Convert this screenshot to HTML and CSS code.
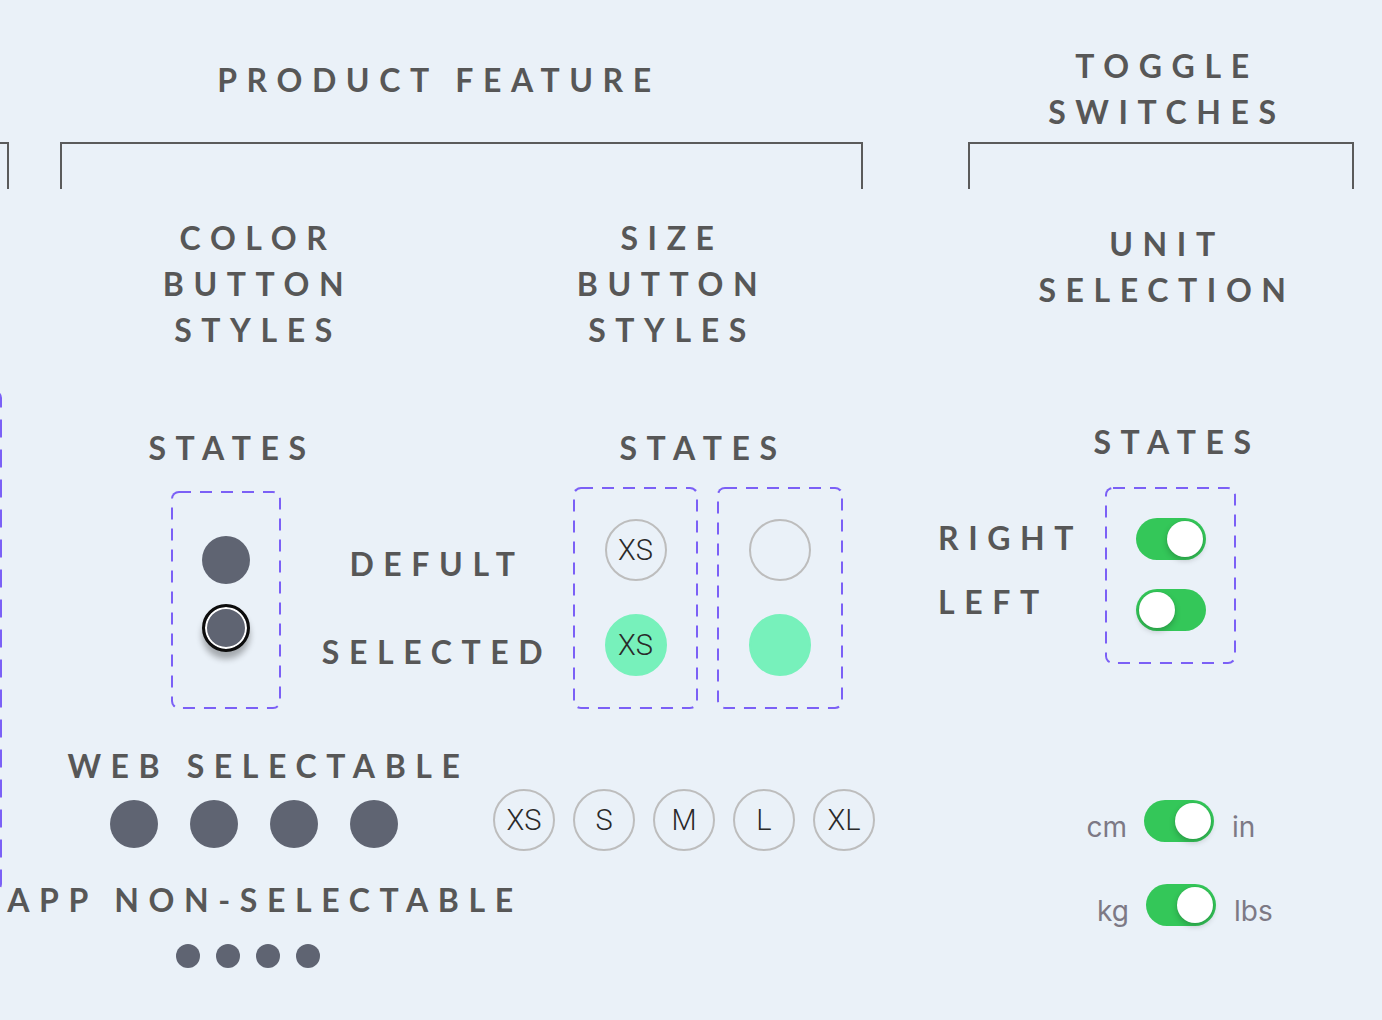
FILE: index.html
```html
<!DOCTYPE html>
<html lang="en">
<head>
    <meta charset="UTF-8">
    <title>Product feature buttons</title>
    <link rel="stylesheet" href="styles.css">
</head>
<body>
<div class="board">
    <!-- 商品规格按钮 -->
    <section class="feature">
        <h2 class="label feature-title">PRODUCT FEATURE</h2>
        <div class="brackets">
            <div class="bracket bracket-end"></div>
            <div class="bracket bracket-feature"></div>
        </div>

        <div class="titles">
            <h3 class="label title-color">COLOR<br>BUTTON<br>STYLES</h3>
            <h3 class="label title-size">SIZE<br>BUTTON<br>STYLES</h3>
        </div>

        <div class="states-row">
            <div class="label states-color">STATES</div>
            <div class="label states-size">STATES</div>
        </div>

        <div class="demo">
            <div class="frame frame-color">
                <span class="dot"></span>
                <span class="dot dot-selected"></span>
            </div>
            <div class="state-names">
                <div class="label">DEFULT</div>
                <div class="label selected-name">SELECTED</div>
            </div>
            <div class="frame frame-size">
                <span class="size">XS</span>
                <span class="size size-on">XS</span>
            </div>
            <div class="frame frame-size frame-blank">
                <span class="size"></span>
                <span class="size size-on"></span>
            </div>
        </div>

        <div class="web-row">
            <div class="web">
                <div class="label web-name">WEB SELECTABLE</div>
                <div class="dots">
                    <span class="dot"></span>
                    <span class="dot"></span>
                    <span class="dot"></span>
                    <span class="dot"></span>
                </div>
            </div>
            <div class="sizes">
                <span class="size">XS</span>
                <span class="size">S</span>
                <span class="size">M</span>
                <span class="size">L</span>
                <span class="size">XL</span>
            </div>
        </div>

        <div class="app">
            <div class="label app-name">APP NON-SELECTABLE</div>
            <div class="dots dots-small">
                <span class="dot"></span>
                <span class="dot"></span>
                <span class="dot"></span>
                <span class="dot"></span>
            </div>
        </div>

        <div class="frame frame-offcut"></div>
    </section>

    <!-- 开关 -->
    <section class="toggles">
        <h2 class="label toggles-title">TOGGLE<br>SWITCHES</h2>
        <div class="bracket bracket-toggles"></div>
        <h3 class="label unit-title">UNIT<br>SELECTION</h3>
        <div class="label toggle-states">STATES</div>

        <div class="toggle-demo">
            <div class="sides">
                <div class="label">RIGHT</div>
                <div class="label side-left">LEFT</div>
            </div>
            <div class="frame frame-toggle">
                <span class="switch"><span class="knob"></span></span>
                <span class="switch switch-left"><span class="knob"></span></span>
            </div>
        </div>

        <div class="unit">
            <span class="unit-from">cm</span>
            <span class="switch"><span class="knob"></span></span>
            <span class="unit-to">in</span>
        </div>
        <div class="unit unit-weight">
            <span class="unit-from">kg</span>
            <span class="switch"><span class="knob"></span></span>
            <span class="unit-to">lbs</span>
        </div>
    </section>
</div>
</body>
</html>
```

FILE: styles.css
```css
* {
    box-sizing: border-box;
}

body {
    margin: 0;
    background: #eaf1f8;
    font-family: "Lato", "Noto Sans", sans-serif;
    color: #575757;
}

.board {
    display: flex;
    width: 1382px;
    height: 1020px;
    overflow: hidden;
}

.label {
    margin: 0;
    font-size: 32px;
    font-weight: 700;
    letter-spacing: 9.6px;
    line-height: 46px;
    text-align: center;
}

/* 左侧：商品规格 */
.feature {
    width: 900px;
    flex: none;
    position: relative;
}

.feature-title {
    margin-top: 57px;
    width: 878px;
}

.brackets {
    display: flex;
    margin-top: 39px;
}

.bracket {
    height: 47px;
    border: 2px solid #5b5b5b;
    border-bottom: 0;
}

.bracket-end {
    width: 9px;
    border-left: 0;
}

.bracket-feature {
    width: 803px;
    margin-left: 51px;
}

.titles {
    display: flex;
    margin-top: 26px;
}

.title-color {
    width: 300px;
    margin-left: 108px;
}

.title-size {
    width: 300px;
    margin-left: 114px;
}

.states-row {
    display: flex;
    margin-top: 72px;
}

.states-color {
    width: 200px;
    margin-left: 132px;
}

.states-size {
    width: 200px;
    margin-left: 271px;
}

.demo {
    display: flex;
    align-items: flex-start;
    margin-top: 16px;
}

/* 虚线框：用 svg 画长一点的虚线 */
.frame {
    border: 2px solid transparent;
    border-radius: 8px;
    background: url("data:image/svg+xml,%3Csvg xmlns='http://www.w3.org/2000/svg' width='100%25' height='100%25'%3E%3Crect width='100%25' height='100%25' rx='8' ry='8' fill='none' stroke='%237b60f6' stroke-width='4' stroke-dasharray='12 9'/%3E%3C/svg%3E") border-box no-repeat;
}

.frame-color {
    width: 110px;
    height: 218px;
    margin: 4px 0 0 171px;
    padding-top: 43px;
    display: flex;
    flex-direction: column;
    align-items: center;
    gap: 20px;
}

.dot {
    width: 48px;
    height: 48px;
    border-radius: 50%;
    background: #5f6472;
    flex: none;
}

.dot-selected {
    border: 3px solid #0d0d0d;
    box-shadow: inset 0 0 0 2px #fff, 0 7px 6px rgba(0, 0, 0, 0.3);
}

.state-names {
    width: 260px;
    margin-left: 26px;
    padding-top: 54px;
}

.selected-name {
    margin-top: 42px;
}

.frame-size {
    width: 125px;
    height: 222px;
    margin-left: 6px;
    padding-top: 30px;
    display: flex;
    flex-direction: column;
    align-items: center;
    gap: 33px;
}

.frame-blank {
    width: 126px;
    margin-left: 19px;
}

.size {
    width: 62px;
    height: 62px;
    flex: none;
    border: 2px solid #bdbdbd;
    border-radius: 50%;
    display: flex;
    align-items: center;
    justify-content: center;
    font-family: "Roboto", "Liberation Sans", sans-serif;
    font-size: 29px;
    font-weight: 300;
    color: #2a2a2a;
}

.size-on {
    background: #77f1bb;
    border-color: #77f1bb;
}

.web-row {
    display: flex;
    align-items: flex-start;
    margin-top: 34px;
}

.web {
    width: 480px;
    flex: none;
}

.web-name {
    padding-left: 57px;
}

.dots {
    display: flex;
    gap: 32px;
    padding-left: 110px;
    margin-top: 11px;
}

.sizes {
    display: flex;
    gap: 18px;
    margin: 46px 0 0 13px;
}

.app {
    margin-top: 26px;
}

.app-name {
    width: 530px;
}

.dots-small {
    gap: 16px;
    padding-left: 176px;
    margin-top: 21px;
}

.dots-small .dot {
    width: 24px;
    height: 24px;
}

/* 画面左边缘露出的一截虚线框 */
.frame-offcut {
    position: absolute;
    left: -100px;
    top: 390px;
    width: 102px;
    height: 502px;
    background-image: url("data:image/svg+xml,%3Csvg xmlns='http://www.w3.org/2000/svg' width='100%25' height='100%25'%3E%3Crect width='100%25' height='100%25' rx='8' ry='8' fill='none' stroke='%237b60f6' stroke-width='4' stroke-dasharray='18 12'/%3E%3C/svg%3E");
}

/* 右侧：开关 */
.toggles {
    flex: 1;
}

.toggles-title {
    width: 300px;
    margin-top: 43px;
    margin-left: 117px;
}

.bracket-toggles {
    width: 386px;
    margin: 7px 0 0 68px;
}

.unit-title {
    width: 300px;
    margin: 32px 0 0 117px;
}

.toggle-states {
    width: 300px;
    margin: 106px 0 0 127px;
}

.toggle-demo {
    display: flex;
    margin-top: 22px;
}

.sides {
    width: 167px;
    margin-left: 38px;
    padding-top: 28px;
}

.sides .label {
    text-align: left;
}

.side-left {
    margin-top: 18px;
}

.frame-toggle {
    width: 131px;
    height: 177px;
    padding-top: 29px;
    display: flex;
    flex-direction: column;
    align-items: center;
    gap: 29px;
}

.switch {
    width: 70px;
    height: 42px;
    flex: none;
    padding: 3px;
    border-radius: 21px;
    background: #34c759;
    display: flex;
    justify-content: flex-end;
}

.switch-left {
    justify-content: flex-start;
}

.knob {
    width: 36px;
    height: 36px;
    border-radius: 50%;
    background: #fff;
    box-shadow: 0 3px 6px rgba(0, 0, 0, 0.22), 0 0 0 0.5px rgba(0, 0, 0, 0.06);
}

.unit {
    display: flex;
    height: 42px;
    margin: 136px 0 0 167px;
    font-family: "Inter", "Noto Sans", sans-serif;
    font-size: 28px;
    line-height: 34px;
    color: #7d7985;
}

.unit-weight {
    margin: 42px 0 0 169px;
}

/* 文字比开关中线略低 */
.unit-from,
.unit-to {
    align-self: flex-end;
    margin-bottom: -2px;
}

.unit-from {
    width: 60px;
    margin-right: 17px;
    text-align: right;
}

.unit-to {
    margin-left: 18px;
}
```
